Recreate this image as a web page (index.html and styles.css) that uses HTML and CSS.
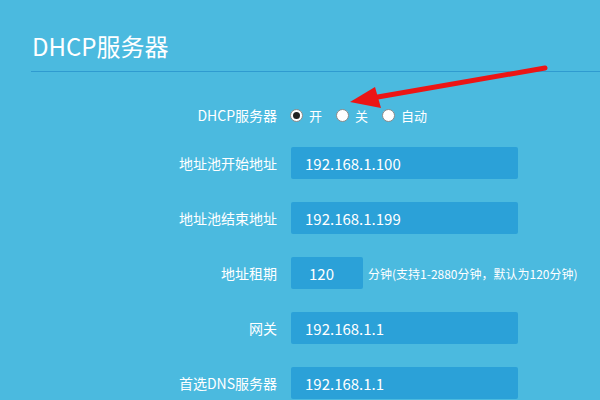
FILE: index.html
```html
<!DOCTYPE html>
<html>
<head>
    <title>DHCP服务器</title>
    <link rel="stylesheet" href="styles.css">
</head>
<body>
    <div class="page">
        <h1 class="page-title">DHCP服务器</h1>

        <div class="form">
            <div class="row radio-row">
                <label class="row-label">DHCP服务器</label>
                <div class="radio-group">
                    <label class="radio"><input type="radio" name="dhcp" checked> 开</label>
                    <label class="radio"><input type="radio" name="dhcp"> 关</label>
                    <label class="radio"><input type="radio" name="dhcp"> 自动</label>
                </div>
            </div>
            <div class="row">
                <label class="row-label">地址池开始地址</label>
                <input class="field" type="text" value="192.168.1.100">
            </div>
            <div class="row">
                <label class="row-label">地址池结束地址</label>
                <input class="field" type="text" value="192.168.1.199">
            </div>
            <div class="row">
                <label class="row-label">地址租期</label>
                <input class="field field-short" type="text" value="120">
                <span class="hint">分钟(支持1-2880分钟，默认为120分钟)</span>
            </div>
            <div class="row">
                <label class="row-label">网关</label>
                <input class="field" type="text" value="192.168.1.1">
            </div>
            <div class="row">
                <label class="row-label">首选DNS服务器</label>
                <input class="field" type="text" value="192.168.1.1">
            </div>
        </div>

        <!-- pointer drawn over the on/off switch -->
        <svg class="pointer" width="600" height="400" viewBox="0 0 600 400">
            <line x1="545" y1="68" x2="372" y2="98" stroke="#ec1515" stroke-width="5" stroke-linecap="round"/>
            <polygon points="350,102 375,87 381,108" fill="#ec1515"/>
        </svg>
    </div>
</body>
</html>
```

FILE: styles.css
```css
body {
    margin: 0;
    background: #4bbadf;
    font-family: "Noto Sans CJK SC", "Noto Sans", sans-serif;
    color: #fff;
    overflow: hidden;
}

.page {
    position: relative;
    height: 400px;
}

.page-title {
    margin: 0 0 0 31px;
    padding: 28px 0 0 1px;
    height: 43px;
    font-size: 24px;
    font-weight: normal;
    line-height: 36px;
    border-bottom: 1px solid #2f9bd0;
}

.form {
    padding-top: 31px;
}

.row {
    display: flex;
    align-items: center;
    height: 32px;
    margin-bottom: 23px;
}

.radio-row {
    height: 24px;
    margin-bottom: 20px;
}

.row-label {
    width: 277px;
    margin-right: 14px;
    text-align: right;
    font-size: 14px;
}

.radio-group {
    display: flex;
    align-items: center;
    margin-left: -1px;
    gap: 14px;
}

.radio {
    display: flex;
    align-items: center;
    font-size: 13px;
}

.radio input {
    appearance: none;
    width: 13px;
    height: 13px;
    margin: 0 6px 0 0;
    border: 1px solid #8a8a8a;
    border-radius: 50%;
    background: #fff;
    position: relative;
}

.radio input:checked::after {
    content: "";
    position: absolute;
    left: 2px;
    top: 2px;
    width: 7px;
    height: 7px;
    border-radius: 50%;
    background: #222;
}

.field {
    box-sizing: border-box;
    width: 227px;
    height: 32px;
    padding: 0 14px;
    border: none;
    border-radius: 2px;
    background: #2ba1d8;
    color: #fff;
    font-family: inherit;
    font-size: 15px;
    outline: none;
}

.field-short {
    width: 72px;
    padding-left: 18px;
}

.hint {
    margin-left: 5px;
    font-size: 12px;
}

.pointer {
    position: absolute;
    left: 0;
    top: 0;
}
```
